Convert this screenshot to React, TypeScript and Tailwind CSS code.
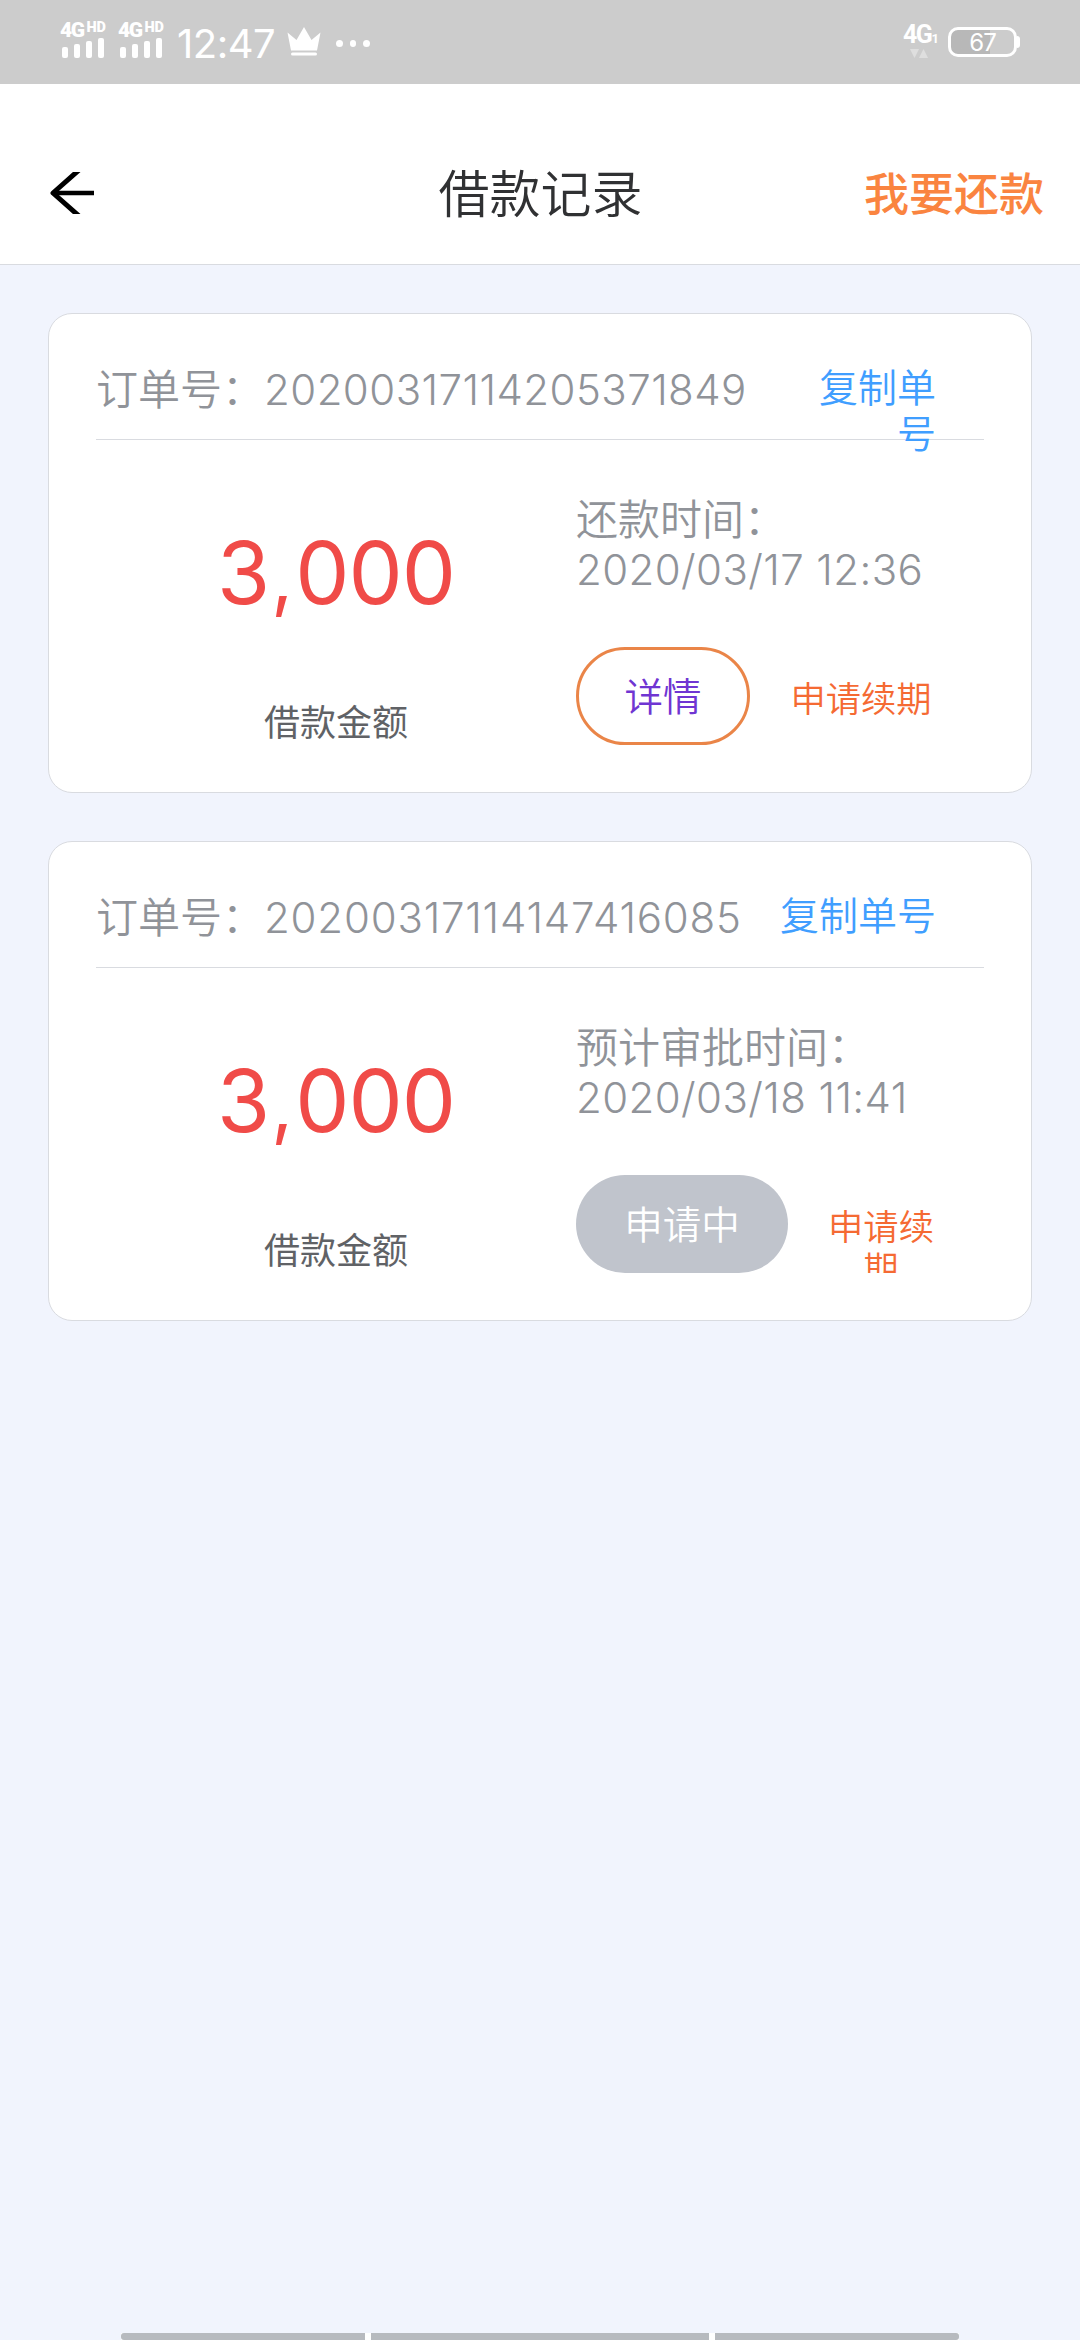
interface Loan {
  orderNo: string;
  amount: string;
  timeLabel: string;
  time: string;
  pending: boolean;
}

const loans: Loan[] = [
  {
    orderNo: "20200317114205371849",
    amount: "3,000",
    timeLabel: "还款时间：",
    time: "2020/03/17 12:36",
    pending: false,
  },
  {
    orderNo: "20200317114147416085",
    amount: "3,000",
    timeLabel: "预计审批时间：",
    time: "2020/03/18 11:41",
    pending: true,
  },
];

function Signal() {
  return (
    <div className="w-[46px] font-[Roboto,sans-serif]">
      <div className="flex h-[15px] items-start justify-between font-black">
        <span className="text-[21px] leading-[16px] tracking-[-1.5px]">4G</span>
        <span className="text-[14.5px] leading-[11px]">HD</span>
      </div>
      <div className="mt-[1px] ml-[2px] flex h-[20px] w-[42px] items-end justify-between">
        <i className="h-[11px] w-[6px] rounded-[2px] bg-white" />
        <i className="h-[14px] w-[6px] rounded-[2px] bg-white" />
        <i className="h-[17px] w-[6px] rounded-[2px] bg-white" />
        <i className="h-[20px] w-[6px] rounded-[2px] bg-white" />
      </div>
    </div>
  );
}

function StatusBar() {
  return (
    <div className="flex h-[84px] items-start justify-between bg-[#cccccc] pr-[60px] pl-[60px] text-white">
      <div className="flex items-start">
        <div className="flex gap-3 pt-[22px]">
          <Signal />
          <Signal />
        </div>
        <span className="ml-[13px] w-[98px] pt-[20px] text-[40px] leading-[48px] tracking-[-0.5px] whitespace-nowrap">
          12:47
        </span>
        <svg className="mt-[27px] ml-[12px]" width="34" height="29" viewBox="0 0 34 29" fill="white">
          <path d="M0.5 5.5L9.5 13L17 0L24.5 13L33.5 5.5L30 23.5H4Z" />
          <rect x="4" y="25.5" width="26" height="3" rx="1.5" />
        </svg>
        <div className="mt-[40px] ml-[15px] flex gap-[7px]">
          <i className="size-[6.5px] rounded-full bg-white" />
          <i className="size-[6.5px] rounded-full bg-white" />
          <i className="size-[6.5px] rounded-full bg-white" />
        </div>
      </div>
      <div className="flex items-start">
        <div className="w-[34px] pt-[26px] font-[Roboto,sans-serif]">
          <div className="flex h-[18px] items-end font-bold">
            <span className="text-[25px] leading-[18px] tracking-[-1.5px]">4G</span>
            <span className="text-[13px] leading-[11px]">1</span>
          </div>
          <svg className="mt-[5px] ml-[7px]" width="18" height="9" viewBox="0 0 18 9" fill="#dedede">
            <path d="M0 0H9L4.5 9Z" />
            <path d="M9 9H18L13.5 0Z" />
          </svg>
        </div>
        <div className="mt-[27px] ml-[11px] flex items-center">
          <div className="flex h-[30px] w-[69px] items-center justify-center rounded-[10px] border-[3.5px] border-white bg-linear-to-r from-[#b8b8b8] from-62% to-[#cccccc] to-62% pt-[2px] text-[24px] leading-[24px] tracking-[-1px]">
            67
          </div>
          <i className="h-[12px] w-[3px] rounded-r-[3px] bg-white" />
        </div>
      </div>
    </div>
  );
}

function Header() {
  return (
    <header className="flex h-[181px] items-center justify-between border-b border-[#d9dbe0] bg-white pt-[38px] pr-[36px] pl-[50px]">
      <svg width="46" height="42" viewBox="0 0 46 42" fill="none" stroke="black" strokeWidth="4.5">
        <path d="M44 21H3" />
        <path d="M29 -2L3 21L29 44" strokeWidth="5" strokeLinejoin="round" />
      </svg>
      <h1 className="ml-[121px] pt-[3px] text-[51px] leading-[60px] font-[350] whitespace-nowrap text-[#303133]">
        借款记录
      </h1>
      <a className="pt-[3px] text-[45px] leading-[54px] font-medium whitespace-nowrap text-[#fa8440]">
        我要还款
      </a>
    </header>
  );
}

function LoanCard({ loan }: { loan: Loan }) {
  const [thousands, rest] = loan.amount.split(",");

  return (
    <section className="h-[480px] rounded-[24px] border border-[#d9dbe0] bg-white px-[47px]">
      <div className="flex h-[126px] justify-between border-b border-[#d9dbe0] pt-[51px] pr-[48px]">
        <p className="text-[42px] leading-[50px] font-[350] whitespace-nowrap text-[#909399]">
          订单号：
          <span className={`font-light ${loan.pending ? "tracking-[0.8px]" : "tracking-[0.45px]"}`}>
            {loan.orderNo}
          </span>
        </p>
        <a
          className={`text-right text-[39px] leading-[46px] font-[350] text-[#409eff] ${
            loan.pending ? "w-[156px]" : "w-[118px]"
          }`}
        >
          复制单号
        </a>
      </div>
      <div className="flex pt-[55px]">
        <div className="flex w-[480px] flex-col items-center">
          <strong className="mt-[28px] h-[100px] text-[86px] leading-[100px] font-normal tracking-[-1px] whitespace-nowrap text-[#f04b48]">
            {thousands}
            <span className="ml-[2px] text-[76px] tracking-[2px]">,</span>
            {rest}
          </strong>
          <span className="mt-[78px] text-[36px] leading-[44px] text-[#606266]">借款金额</span>
        </div>
        <div>
          <p className="text-[42px] leading-[50px] font-[350] whitespace-nowrap text-[#909399]">
            {loan.timeLabel}
            <br />
            <span className="font-light tracking-[0.4px]">{loan.time}</span>
          </p>
          <div className="mt-[52px] flex h-[98px] w-[360px] overflow-hidden">
            {loan.pending ? (
              <button className="h-[98px] w-[212px] rounded-full bg-[#c0c4cc] pt-[4px] text-[38.5px] font-[350] text-white">
                申请中
              </button>
            ) : (
              <button className="h-[98px] w-[174px] rounded-full border-3 border-[#ea8548] pt-[4px] text-[38.5px] font-[350] text-[#6f35d2]">
                详情
              </button>
            )}
            <a
              className={`ml-[40px] pt-[32px] text-center text-[35.3px] leading-[42px] font-[350] text-[#f56a33] ${
                loan.pending ? "w-[106px]" : "w-[142px]"
              }`}
            >
              申请续期
            </a>
          </div>
        </div>
      </div>
    </section>
  );
}

export default function App() {
  return (
    <div
      lang="zh-CN"
      className="flex h-[2340px] w-[1080px] flex-col overflow-hidden bg-[#f1f4fd] font-[Inter,'Noto_Sans_CJK_SC',sans-serif]"
    >
      <StatusBar />
      <Header />
      <main className="flex flex-1 flex-col gap-12 px-12 pt-12">
        {loans.map((loan) => (
          <LoanCard key={loan.orderNo} loan={loan} />
        ))}
      </main>
      <div className="mx-auto flex h-[7px] w-[838px] gap-[6px] bg-white">
        <i className="flex-1 rounded-l-[3px] bg-[#b7babf]" />
        <i className="w-[338px] bg-[#b7babf]" />
        <i className="flex-1 rounded-r-[3px] bg-[#b7babf]" />
      </div>
    </div>
  );
}
